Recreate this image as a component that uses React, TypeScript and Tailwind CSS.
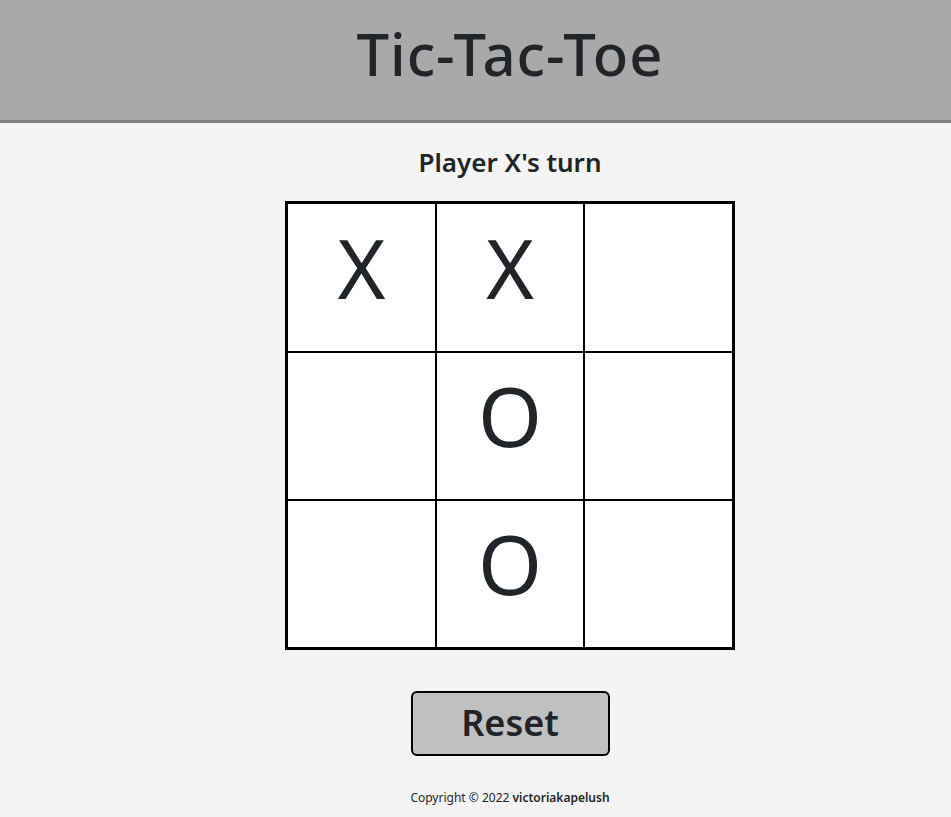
import { useState } from "react";

type Cell = "X" | "O" | null;

const font = { fontFamily: '"Noto Sans", "Open Sans", sans-serif' };

export default function App() {
  const [cells, setCells] = useState<Cell[]>(["X", "X", null, null, "O", null, null, "O", null]);
  const [turn, setTurn] = useState<"X" | "O">("X");

  const play = (i: number) => {
    if (cells[i]) return;
    const next = [...cells];
    next[i] = turn;
    setCells(next);
    setTurn(turn === "X" ? "O" : "X");
  };

  const reset = () => {
    setCells(Array(9).fill(null));
    setTurn("X");
  };

  return (
    <div className="min-h-[817px] bg-[#f4f4f4] text-[#212529]" style={font}>
      <header className="h-[123px] bg-[#a9a9a9] border-b-[3px] border-[#808080] flex items-center justify-center pl-[69px]">
        <h1 className="text-[58px] leading-none font-medium tracking-[1px] -mt-[12px]">Tic-Tac-Toe</h1>
      </header>

      <main className="flex flex-col items-center pl-[69px]">
        <p className="mt-[21px] text-[26px] leading-[36px] font-semibold">Player {turn}'s turn</p>

        <div className="mt-[21px] grid grid-cols-[147px_146px_147px] grid-rows-[147px_146px_146px] gap-[2px] bg-black border-[3px] border-black">
          {cells.map((c, i) => (
            <button
              key={i}
              onClick={() => play(i)}
              className="bg-white flex items-center justify-center text-[82px] leading-none font-normal pb-[22px]"
            >
              {c}
            </button>
          ))}
        </div>

        <button
          onClick={reset}
          className="mt-[41px] w-[199px] h-[65px] bg-[#c0c0c0] border-2 border-black rounded-[6px] text-[36px] font-semibold leading-none pb-[2px]"
        >
          Reset
        </button>

        <footer className="mt-[33px] text-[12px] leading-[18px]">
          Copyright © 2022 <span className="font-semibold">victoriakapelush</span>
        </footer>
      </main>
    </div>
  );
}
